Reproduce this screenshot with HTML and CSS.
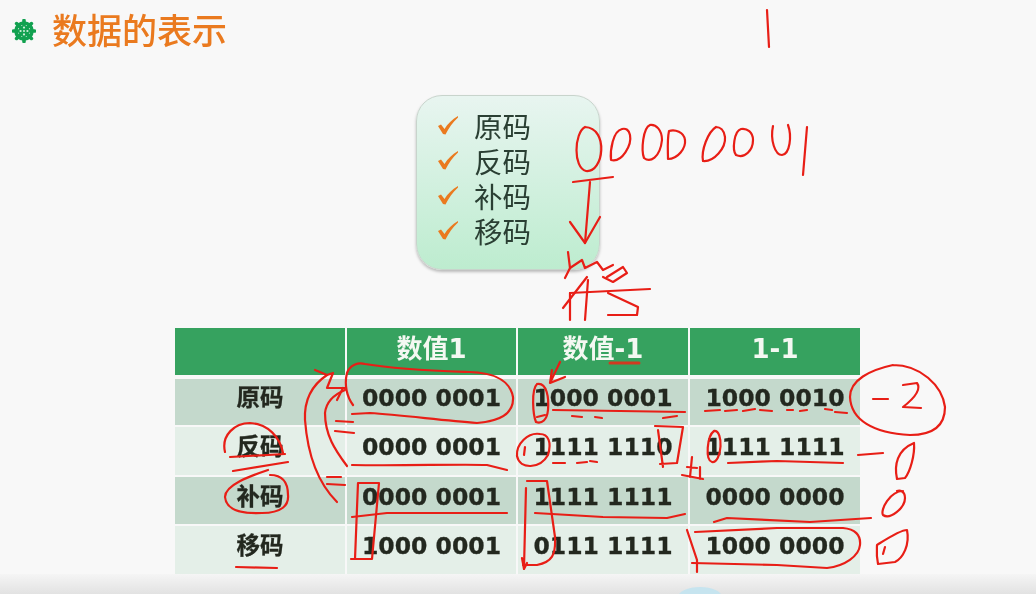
FILE: index.html
```html
<!DOCTYPE html>
<html lang="zh-CN">
<head>
    <meta charset="UTF-8">
    <title>数据的表示</title>
    <link rel="stylesheet" href="styles.css">
</head>
<body>
    <div class="slide">
        <div class="title-row">
            <svg class="title-icon" viewBox="0 0 24 24">
                <path d="M12 1.5v21M1.5 12h21M4.6 4.6l14.8 14.8M19.4 4.6L4.6 19.4" stroke="#12a150" stroke-width="3.6" stroke-linecap="round"/>
                <circle cx="12" cy="12" r="8" fill="none" stroke="#12a150" stroke-width="3.6"/>
                <circle cx="12" cy="12" r="5.4" fill="#12a150"/>
                <circle cx="12" cy="8.6" r="1.1" fill="#cfeeda"/>
                <circle cx="12" cy="15.4" r="1.1" fill="#cfeeda"/>
                <circle cx="8.6" cy="12" r="1.1" fill="#cfeeda"/>
                <circle cx="15.4" cy="12" r="1.1" fill="#cfeeda"/>
                <circle cx="12" cy="12" r="1" fill="#cfeeda"/>
            </svg>
            <h1>数据的表示</h1>
        </div>

        <ul class="code-box">
            <li><svg class="check" viewBox="0 0 20 20"><path d="M0 10L3 8.500L6.500 13C9.500 8 14 3.500 20 0L20.500 1C15 6 11 11.500 7.500 18.500L5 18z"/></svg>原码</li>
            <li><svg class="check" viewBox="0 0 20 20"><path d="M0 10L3 8.500L6.500 13C9.500 8 14 3.500 20 0L20.500 1C15 6 11 11.500 7.500 18.500L5 18z"/></svg>反码</li>
            <li><svg class="check" viewBox="0 0 20 20"><path d="M0 10L3 8.500L6.500 13C9.500 8 14 3.500 20 0L20.500 1C15 6 11 11.500 7.500 18.500L5 18z"/></svg>补码</li>
            <li><svg class="check" viewBox="0 0 20 20"><path d="M0 10L3 8.500L6.500 13C9.500 8 14 3.500 20 0L20.500 1C15 6 11 11.500 7.500 18.500L5 18z"/></svg>移码</li>
        </ul>

        <div class="code-table">
            <div class="cell head"></div>
            <div class="cell head">数值1</div>
            <div class="cell head">数值-1</div>
            <div class="cell head">1-1</div>

            <div class="cell dark">原码</div>
            <div class="cell dark">0000 0001</div>
            <div class="cell dark">1000 0001</div>
            <div class="cell dark">1000 0010</div>

            <div class="cell light">反码</div>
            <div class="cell light">0000 0001</div>
            <div class="cell light">1111 1110</div>
            <div class="cell light">1111 1111</div>

            <div class="cell dark">补码</div>
            <div class="cell dark">0000 0001</div>
            <div class="cell dark">1111 1111</div>
            <div class="cell dark">0000 0000</div>

            <div class="cell light">移码</div>
            <div class="cell light">1000 0001</div>
            <div class="cell light">0111 1111</div>
            <div class="cell light">1000 0000</div>
        </div>

        <div class="bottom-bar"><span class="bar-blob"></span></div>

        <!-- pen marks the teacher drew over the slide -->
        <svg class="ink" viewBox="0 0 1036 594">
            <path d="M767 10L769 47"/>
            <!-- 00000001 -->
            <path d="M585 127C574 133 573 168 586 171C604 173 609 128 585 127"/>
            <path d="M622 129C613 131 610 150 611 160C622 163 632 145 630 135C629 130 626 128 622 129"/>
            <path d="M650 125C643 128 641 150 644 158C650 163 660 158 662 140C662 130 656 124 650 125"/>
            <path d="M669 131C667 140 668 152 668 159C678 159 686 148 685 140C684 132 675 129 669 131"/>
            <path d="M716 127C708 132 701 150 703 161C714 162 726 148 725 137C724 130 720 127 716 127"/>
            <path d="M741 129C734 131 732 150 736 155C745 159 753 150 753 140C753 132 747 128 741 129"/>
            <path d="M773 126C770 140 775 155 782 155C790 154 792 136 788 125"/>
            <path d="M807 127L803 175"/>
            <!-- T and arrow -->
            <path d="M573 182L613 177"/>
            <path d="M590 182L585 243"/>
            <path d="M570 222L585 243L600 217"/>
            <!-- 符号 -->
            <path d="M568 252L570 268L565 278"/>
            <path d="M570 268L582 260L585 268L597 262L603 270L613 265"/>
            <path d="M607 277L623 267L627 273L613 282L603 277"/>
            <path d="M587 277L563 308"/>
            <path d="M570 293L570 320"/>
            <path d="M570 293L650 289"/>
            <path d="M588 280L585 320"/>
            <path d="M608 293L638 307L637 315L608 315"/>
            <!-- left side arrows -->
            <path d="M337 502C320 485 308 460 305 420C304 400 312 385 327 375L315 370"/>
            <path d="M327 375L333 373L327 388L345 388"/>
            <path d="M347 466C335 450 325 435 325 413C326 403 333 395 345 390"/>
            <path d="M337 400L343 388"/>
            <path d="M336 421L353 422M335 431L354 433"/>
            <path d="M327 477L341 477M327 484L345 485"/>
            <!-- first column -->
            <path d="M353 405C347 397 344 385 347 373C350 365 358 362 365 364C400 370 440 371 470 372C495 373 510 380 513 397C514 412 503 421 477 423C440 420 400 415 370 413L352 414"/>
            <path d="M352 465C400 466 460 464 487 465L507 470"/>
            <path d="M352 517L387 513L507 513"/>
            <path d="M358 483L379 483L372 559L351 559M358 483L355 559"/>
            <!-- row labels -->
            <path d="M225 452C221 435 235 423 250 423C268 424 280 437 283 453"/>
            <path d="M230 457L285 454"/>
            <path d="M233 471L288 462"/>
            <path d="M268 470C250 476 225 485 225 497C226 510 240 514 262 513C282 513 289 505 288 495C288 483 283 475 270 475"/>
            <path d="M236 567L277 568"/>
            <!-- second column -->
            <path d="M610 363L639 363" class="thick"/>
            <path d="M560 362L550 383L565 377M552 370L550 383"/>
            <path d="M537 384C531 390 533 415 536 422C542 424 547 420 548 410C549 398 547 382 537 384"/>
            <path d="M537 417L545 415"/>
            <path d="M553 410L620 411L685 412"/>
            <path d="M572 416L582 417M595 417L602 418M663 418L677 416"/>
            <path d="M540 434C528 432 516 444 517 456C520 470 540 469 548 455C552 442 548 434 540 434"/>
            <path d="M525 447L524 455"/>
            <path d="M553 463L565 463M577 463L587 462M590 461L597 462"/>
            <path d="M655 426L683 427L677 463L660 464M658 430L663 467"/>
            <path d="M527 481L547 481L555 537C556 555 552 562 537 565L523 565"/>
            <path d="M526 488L524 568M522 558L524 569L527 563"/>
            <path d="M535 513L603 517L667 518L685 514"/>
            <!-- third column -->
            <path d="M705 411L720 410M725 411L737 410M743 411L755 409M760 410L772 411M787 410L793 410M800 411L807 410M825 409L832 410M835 412L847 413"/>
            <path d="M714 431C707 436 705 460 712 462C722 463 724 430 714 431"/>
            <path d="M682 475L703 479M692 457L690 477M700 467L700 479M687 467L697 468"/>
            <path d="M728 463L777 461L843 463"/>
            <path d="M714 522L727 518L810 522L871 518"/>
            <path d="M695 532L777 528L843 528C855 529 861 535 860 545C859 556 845 566 827 568L777 565L692 563"/>
            <path d="M687 530L697 560L697 572"/>
            <!-- results on the right -->
            <path d="M893 365C870 370 850 380 850 397C851 420 873 433 910 435C930 435 945 428 945 407C942 385 920 365 893 365"/>
            <path d="M873 399L888 399"/>
            <path d="M903 385L917 383C922 390 912 400 903 407L921 408"/>
            <path d="M858 455L883 453"/>
            <path d="M914 443C915 455 910 472 905 478L897 479C894 465 897 450 914 443"/>
            <path d="M903 491C890 491 880 510 883 515C890 520 905 508 905 498C905 491 900 490 897 491"/>
            <path d="M877 545C885 540 900 530 907 530C910 545 903 558 895 562L878 564C876 555 877 548 877 545"/>
            <path d="M885 547L883 554"/>
        </svg>
    </div>
</body>
</html>
```

FILE: styles.css
```css
* {
    box-sizing: border-box;
}

html, body {
    margin: 0;
    height: 100%;
    overflow: hidden;
}

body {
    background-color: #f8f8f8;
    font-family: "Noto Sans CJK SC", "DejaVu Sans", sans-serif;
}

.slide {
    position: relative;
    width: 1036px;
    height: 594px;
    filter: blur(0.5px);
}

.title-row {
    display: flex;
    align-items: center;
    height: 62px;
    padding-left: 12px;
}

.title-icon {
    width: 24px;
    height: 24px;
    margin-right: 16px;
}

h1 {
    margin: 0 0 5px;
    font-size: 35px;
    font-weight: 500;
    line-height: 56px;
    color: #ea7a1f;
}

.code-box {
    width: 184px;
    height: 175px;
    margin: 33px 0 0 416px;
    padding: 12px 0 0 21px;
    list-style: none;
    border: 1px solid #c8d4cc;
    border-radius: 26px;
    background: linear-gradient(#e8f5f0, #bdeccf);
    box-shadow: 0 2px 3px rgba(0, 0, 0, 0.25);
}

.code-box li {
    display: flex;
    align-items: center;
    height: 35px;
    font-size: 28.5px;
    line-height: 35px;
    color: #2a3f33;
}

.check {
    width: 20px;
    height: 20px;
    margin-right: 16px;
    fill: #ea7a1f;
}

.code-table {
    display: grid;
    grid-template-columns: 170px 169px 170px 170px;
    grid-template-rows: 49px 46px 48px 47px 48px;
    gap: 2px;
    width: 685px;
    margin: 58px 0 0 175px;
}

.cell {
    display: flex;
    align-items: center;
    justify-content: center;
    font-family: "DejaVu Sans", "Noto Sans CJK SC", sans-serif;
    font-size: 23.5px;
    font-weight: 700;
    line-height: 30px;
    color: #23281f;
    -webkit-text-stroke: 0.3px #23281f;
    padding-bottom: 8px;
}

.head {
    margin-bottom: 2px;
    padding-bottom: 6px;
    font-size: 26px;
    background-color: #36a25f;
    color: #f4f8f2;
    -webkit-text-stroke: 0;
}

.dark {
    background-color: #c4d9cc;
}

.light {
    background-color: #e4efe8;
}

.bottom-bar {
    position: relative;
    height: 20px;
    background: linear-gradient(#f5f5f5, #e2e2e2);
    overflow: hidden;
}

.bar-blob {
    position: absolute;
    left: 678px;
    top: 13px;
    width: 44px;
    height: 20px;
    border-radius: 50%;
    background-color: #c6e4ef;
}

.ink {
    position: absolute;
    left: 0;
    top: 0;
    width: 1036px;
    height: 594px;
    fill: none;
    stroke: #e81e16;
    stroke-width: 2.2;
    stroke-linecap: round;
    stroke-linejoin: round;
}

.ink .thick {
    stroke: #d23a20;
    stroke-width: 3;
}
```
